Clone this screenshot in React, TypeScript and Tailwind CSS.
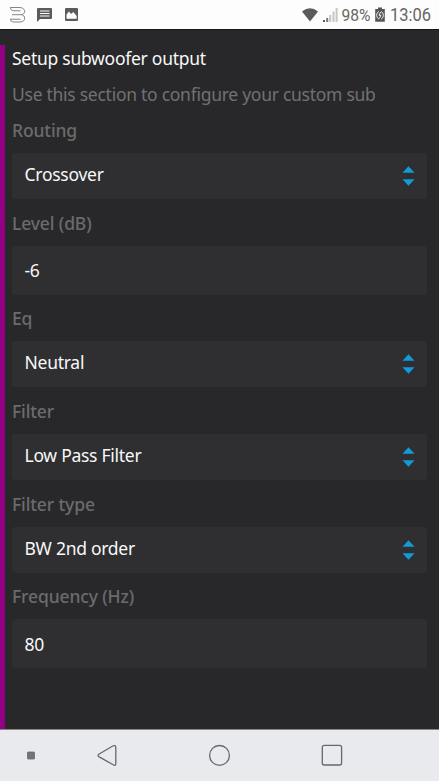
const fields = [
  { label: "Routing", value: "Crossover", type: "select" },
  { label: "Level (dB)", value: "-6", type: "input" },
  { label: "Eq", value: "Neutral", type: "select" },
  { label: "Filter", value: "Low Pass Filter", type: "select" },
  { label: "Filter type", value: "BW 2nd order", type: "select" },
  { label: "Frequency (Hz)", value: "80", type: "input" },
];

function StatusBar() {
  return (
    <div className="flex h-[29px] items-center justify-between bg-[#fdfdfd] text-[#5f5f5f]">
      <svg className="h-[29px] w-[90px]" viewBox="0 0 90 29" fill="none">
        {/* App logo */}
        <path
          d="M20.5 10.8H13Q10.8 10.5 10.3 7.5H20C26 8 26 14 21.5 14.7H12M21.5 14.7C26 15.5 26 22 20 22H13Q10.8 21.8 10.3 19.2H20.5"
          stroke="#777"
          strokeWidth="0.9"
        />
        {/* Message */}
        <path d="M38 8H51Q52 8 52 9V18Q52 19 51 19H40L37 22V9Q37 8 38 8Z" fill="#5b5b5b" />
        <path d="M40 11H49.5M40 13.5H49.5M40 16H49.5" stroke="#fdfdfd" strokeWidth="1.1" />
        {/* Picture */}
        <rect x="65" y="8" width="13" height="13" rx="1" fill="#5b5b5b" />
        <path d="M66.5 18.8V14.5L69 11.5L71 14L73.3 12L76.7 16V18.8Z" fill="#fdfdfd" />
      </svg>
      <svg className="h-[29px] w-[140px]" viewBox="0 0 140 29" fill="none">
        {/* Wifi */}
        <path d="M3 11.5Q11 5 19 11.5L11 21.5Z" fill="#5b5b5b" />
        {/* Signal */}
        <path d="M25 20V22" stroke="#5b5b5b" strokeWidth="2" />
        <path d="M28.2 18V22" stroke="#777" strokeWidth="2" />
        <path d="M31.2 15V22M34.5 11.5V22M37.6 8V22" stroke="#c6c6c6" strokeWidth="2" />
        <text
          x="42.5"
          y="21.3"
          fontSize="17"
          textLength="29"
          lengthAdjust="spacingAndGlyphs"
          fill="#666"
          className="font-[Roboto,sans-serif]"
        >
          98%
        </text>
        {/* Battery */}
        <path d="M79 7.5H83V9H85.8V21.8H76.2V9H79Z" fill="#555" />
        <path d="M80 11.3Q77.5 12.5 77.6 15.5Q77.8 18 80 19.2M82 11.3Q84.5 12.5 84.4 15.5Q84.2 18 82 19.2M81.7 12L80 15.3H82L80.3 18.5" stroke="#fdfdfd" strokeWidth="0.9" />
        <text
          x="91"
          y="21.3"
          fontSize="17.6"
          textLength="41"
          lengthAdjust="spacingAndGlyphs"
          fill="#666"
          className="font-[Roboto,sans-serif]"
        >
          13:06
        </text>
      </svg>
    </div>
  );
}

function UpDown() {
  return (
    <svg className="h-5 w-[13px]" viewBox="0 0 13 20" fill="#129bdb">
      <path d="M0.5 6.8L6.5 0.3L12.5 6.8Z" />
      <path d="M0.5 13.2H12.5L6.5 19.7Z" />
    </svg>
  );
}

function NavBar() {
  return (
    <div className="h-[52px] border-t border-[#8a8688] bg-[#e9eaee]">
      <svg className="h-[51px] w-full" viewBox="0 730 439 51" fill="none" stroke="#67686c" strokeWidth="1.3">
        <rect x="27.5" y="752" width="7" height="7" rx="0.5" fill="#747579" stroke="#67686c" strokeWidth="0.8" />
        <path d="M98.8 754.2L112.8 746Q115.8 744.6 115.8 747.5V763.5Q115.8 766.2 113.2 764.8L98.8 756.6Q97.3 755.4 98.8 754.2Z" />
        <circle cx="219.5" cy="755.4" r="9.9" />
        <rect x="322.3" y="745.4" width="19.3" height="19.6" rx="2" />
      </svg>
    </div>
  );
}

export default function App() {
  return (
    <div className="flex h-[781px] w-[439px] flex-col overflow-hidden bg-[#28282a] font-['Noto_Sans',sans-serif]">
      <StatusBar />
      <div className="flex min-h-0 flex-1 border-t border-[#161617]">
        <div className="mt-[15px] w-[5px] bg-[#930083]" />
        <div className="flex-1 pl-[7px] pr-3 text-[17.5px] tracking-[-0.27px]">
          <h1 className="mt-4 h-[25px] leading-[25px] text-[#f8f8f8]">Setup subwoofer output</h1>
          <p className="mt-[10.7px] h-[25px] leading-[25px] text-[#717173]">
            Use this section to configure your custom sub
          </p>
          {fields.map((field) => (
            <div key={field.label}>
              <div className="flex h-[46.7px] items-center pt-[1px] font-medium tracking-[-0.13px] text-[#6b6b6d]">
                {field.label}
              </div>
              {field.type === "select" ? (
                <div className="flex h-[46px] items-center justify-between rounded-[3px] bg-[#2f2f31] pl-[12.5px] pr-[12px] text-[#f8f8f8]">
                  <span className="-mt-1">{field.value}</span>
                  <UpDown />
                </div>
              ) : (
                <div className="flex h-[48.6px] items-center rounded-[3px] bg-[#2f2f31] pl-[12.5px] text-[#f8f8f8]">
                  {field.value}
                </div>
              )}
            </div>
          ))}
        </div>
      </div>
      <NavBar />
    </div>
  );
}
